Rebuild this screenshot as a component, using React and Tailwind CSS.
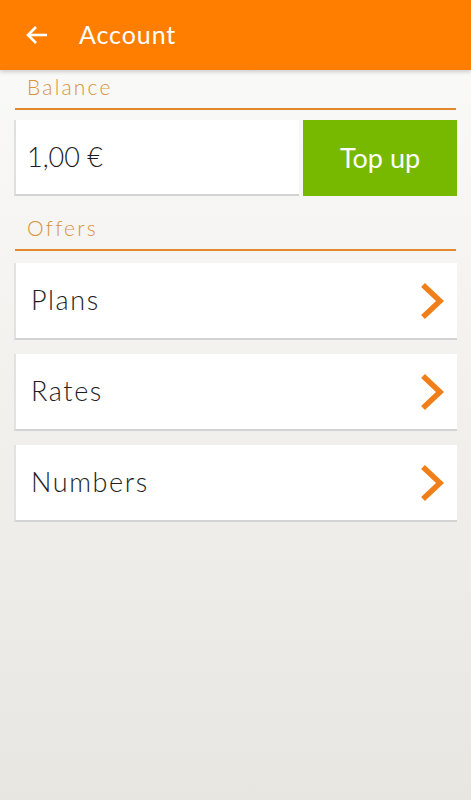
import React from "react";

const Chevron = () => (
  <svg width="26" height="40" viewBox="0 0 26 40" fill="none">
    <polyline points="4,4 21,20 4,36" stroke="#f07f1a" strokeWidth="5.5" strokeLinejoin="miter" />
  </svg>
);

const SectionLabel = ({ children, className = "" }) => (
  <div className={`mx-px border-b-2 border-[#e28a2b] pb-[7px] ${className}`}>
    <div className="pl-[12px] text-[21px] leading-[28px] font-light tracking-[2.2px] text-[#d8933c]">{children}</div>
  </div>
);

const MenuItem = ({ label }) => (
  <div className="flex h-[77px] items-center justify-between bg-white border-l-2 border-l-[#e2e2e2] border-b-2 border-b-[#d3d3d3] pl-[15px] pr-[12px]">
    <span className="text-[27px] font-light text-[#1e1e1e] tracking-[1.6px]">{label}</span>
    <Chevron />
  </div>
);

const App = () => {
  return (
    <div
      className="h-[800px] bg-gradient-to-b from-[#fbfbfa] to-[#e8e6e1]"
      style={{ fontFamily: "Lato, 'Open Sans', sans-serif" }}
    >
      <header className="flex h-[70px] items-center bg-[#ff7e00] shadow-[0_2px_4px_rgba(0,0,0,0.18)]">
        <svg className="ml-[25px]" width="23" height="20" viewBox="0 0 23 20" fill="none">
          <path d="M22 10H3" stroke="white" strokeWidth="2.6" />
          <path d="M11 2L3 10L11 18" stroke="white" strokeWidth="2.6" />
        </svg>
        <h1 className="ml-[31px] text-[25px] text-white tracking-[0.9px]">Account</h1>
      </header>

      <main className="px-[14px]">
        <SectionLabel className="mt-[3px]">Balance</SectionLabel>

        <div className="mt-[10px] flex h-[76px] gap-[4px]">
          <div className="flex flex-1 items-center bg-white border-l-2 border-l-[#e0e0e0] border-b-2 border-b-[#d3d3d3] pl-[11px]">
            <span className="text-[27px] font-light text-[#1e1e1e]">1,00 €</span>
          </div>
          <button className="flex w-[154px] items-center justify-center bg-[#76b900] text-[27px] text-white">
            Top up
          </button>
        </div>

        <SectionLabel className="mt-[18px]">Offers</SectionLabel>

        <div className="mt-[12px] flex flex-col gap-[14px]">
          <MenuItem label="Plans" />
          <MenuItem label="Rates" />
          <MenuItem label="Numbers" />
        </div>
      </main>
    </div>
  );
};

export default App;
